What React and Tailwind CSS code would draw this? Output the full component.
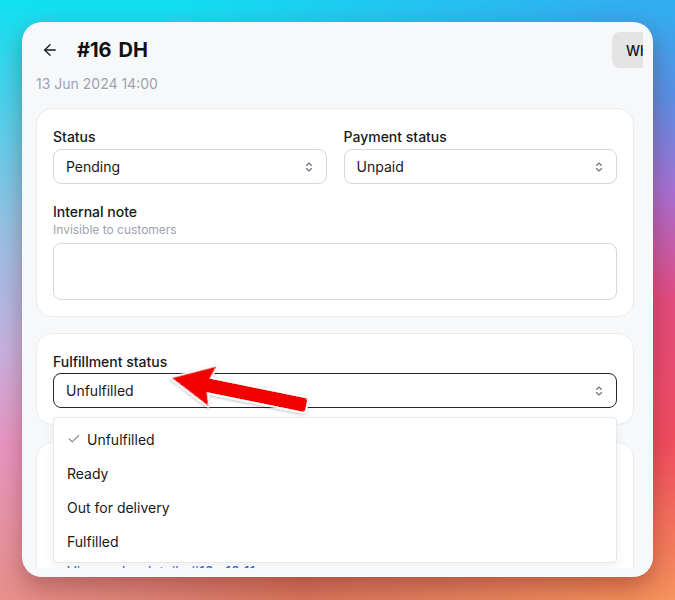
import React from 'react';
import { ArrowLeft, Check } from 'lucide-react';

const font = { fontFamily: 'Inter, "Noto Sans", sans-serif' };

const UpDown = () => (
    <svg width="16" height="16" viewBox="0 0 16 16" fill="none" stroke="#6b7280" strokeWidth="1.1" strokeLinecap="round" strokeLinejoin="round">
        <path d="M5.5 6.5 8 4l2.5 2.5" />
        <path d="M5.5 9.5 8 12l2.5-2.5" />
    </svg>
);

const Select = ({ value, active }) => (
    <div
        className={`flex items-center justify-between h-[35px] pl-[12px] pr-[9px] rounded-lg bg-white text-[14px] text-[#18181b] border ${active ? 'border-[#27272a]' : 'border-[#d4d7de]'}`}
    >
        <span>{value}</span>
        <UpDown />
    </div>
);

const Label = ({ children }) => (
    <div className="text-[14px] leading-5 font-medium text-[#18181b]">{children}</div>
);

const options = ['Unfulfilled', 'Ready', 'Out for delivery', 'Fulfilled'];

export default function App() {
    return (
        <div
            style={font}
            className="relative w-[675px] h-[600px] overflow-hidden pt-[22px] pl-[22px] bg-[linear-gradient(180deg,#0fe0f2_0%,#4fd2ec_18%,#96c2e6_38%,#c6b2e0_58%,#e896c2_74%,#e8908c_100%)]"
        >
            {/* wallpaper: warmer, more saturated right half */}
            <div className="absolute inset-0 bg-[linear-gradient(180deg,#2fb0f0_0%,#5a90e6_16%,#a870d4_32%,#e44c80_50%,#f24e60_74%,#f6935c_100%)] [mask-image:linear-gradient(90deg,transparent_25%,black_90%)]" />
            <div className="absolute left-0 right-0 bottom-0 h-[40px] bg-[linear-gradient(90deg,rgba(230,140,140,0)_0%,rgba(205,100,70,0.6)_45%,rgba(240,130,80,0)_100%)]" />

            <div className="relative w-[631px] h-[555px] rounded-[20px] bg-[#f7f8fa] shadow-[0_10px_24px_rgba(80,20,10,0.35)] pr-[10px] pb-[9px]">
                <div className="h-full overflow-hidden pl-[14px] pr-[9px]">
                    {/* header */}
                    <div className="flex items-center pt-[10px] w-[680px]">
                        <div className="flex items-center w-[576px] shrink-0">
                            <div className="w-[28px] h-[28px] flex items-center justify-center">
                                <ArrowLeft size={18} strokeWidth={1.7} color="#18181b" />
                            </div>
                            <h1 className="ml-[13px] flex gap-[7px] text-[20px] font-bold text-[#111] leading-7">
                                <span>#16</span>
                                <span>DH</span>
                            </h1>
                        </div>
                        <button className="shrink-0 h-[36px] pl-[14px] pr-[12px] rounded-lg bg-[#e4e4e5] text-[14px] font-medium text-[#18181b]">
                            WhatsApp
                        </button>
                    </div>
                    <div className="mt-[6px] text-[14px] leading-5 text-[#9ca3af]">13 Jun 2024 14:00</div>

                    {/* order state card */}
                    <div className="mt-[14px] bg-white border border-[#ececee] rounded-2xl pt-[18px] px-4 pb-4">
                        <div className="grid grid-cols-2 gap-[17px]">
                            <div>
                                <Label>Status</Label>
                                <div className="mt-[2px]">
                                    <Select value="Pending" />
                                </div>
                            </div>
                            <div>
                                <Label>Payment status</Label>
                                <div className="mt-[2px]">
                                    <Select value="Unpaid" />
                                </div>
                            </div>
                        </div>
                        <div className="mt-[18px]">
                            <Label>Internal note</Label>
                            <div className="text-[12px] leading-4 text-[#9ca3af]">Invisible to customers</div>
                            <div className="mt-[5px] h-[57px] rounded-lg border border-[#d4d7de] bg-white" />
                        </div>
                    </div>

                    {/* fulfillment card */}
                    <div className="relative z-10 mt-[16px] bg-white border border-[#ececee] rounded-2xl pt-[18px] px-4 pb-4">
                        <Label>Fulfillment status</Label>
                        <div className="mt-[1px]">
                            <Select value="Unfulfilled" active />
                        </div>

                        <div className="absolute left-[16px] right-[16px] top-[83px] py-1 bg-white border border-[#e6e7ea] rounded-[4px] shadow-[0_4px_12px_rgba(0,0,0,0.06)]">
                            {options.map((opt, i) => (
                                <div key={opt} className="h-[34px] flex items-center pl-[13px] text-[14px] text-[#18181b]">
                                    {i === 0 && <Check size={14} strokeWidth={2} color="#8a8a8f" className="mr-[6px]" />}
                                    <span>{opt}</span>
                                </div>
                            ))}
                        </div>
                    </div>

                    {/* next card, mostly under the menu */}
                    <div className="mt-[17px] bg-white border border-[#ececee] rounded-2xl p-4">
                        <div className="h-[103px]" />
                        <div className="pl-[14px] text-[14px] leading-5 text-[#2563eb]">View order details #16 · 10:11</div>
                    </div>
                </div>
            </div>

            {/* red callout arrow */}
            <svg className="absolute left-0 top-0 z-20 pointer-events-none" width="675" height="600">
                <defs>
                    <filter id="arrowShadow" x="-20%" y="-50%" width="140%" height="200%">
                        <feDropShadow dx="0" dy="1" stdDeviation="1.5" floodColor="#000" floodOpacity="0.3" />
                    </filter>
                </defs>
                <g transform="translate(172 378) rotate(11.5)" filter="url(#arrowShadow)">
                    <path
                        d="M0 0 L41 -20 L37 -7 L134 -7 Q137 -7 137 -4 L137 4 Q137 7 134 7 L37 7 L41 20 Z"
                        fill="#f20000"
                        stroke="#fff"
                        strokeWidth="3.5"
                        strokeLinejoin="round"
                        paintOrder="stroke"
                    />
                </g>
            </svg>
        </div>
    );
}
